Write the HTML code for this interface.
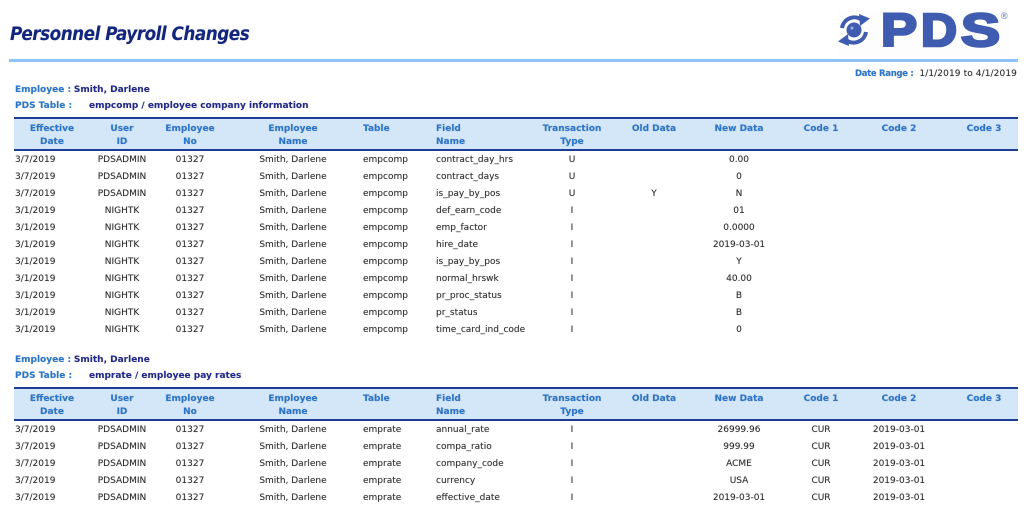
<!DOCTYPE html>
<html><head><meta charset="utf-8"><style>
html,body{margin:0;padding:0;background:#fff}
body{width:1024px;height:504px;overflow:hidden;position:relative;font-family:"DejaVu Sans",sans-serif;font-size:9px;color:#2a2a2a;text-shadow:0 0 1px rgba(40,40,60,.3)}
.a{position:absolute;white-space:nowrap}
h1{position:absolute;margin:0;left:10px;top:24px;font:italic bold 18.5px "DejaVu Sans",sans-serif;color:#12267e;white-space:nowrap;letter-spacing:-.55px;transform:scaleX(.91);transform-origin:0 0}
.bar{position:absolute;left:9px;top:59px;width:1009px;height:3px;background:#8fc4f8}
.l{color:#2876cc;font-weight:bold}.n{color:#23298a;font-weight:bold}
table{position:absolute;left:14px;width:1004px;border-collapse:collapse;table-layout:fixed}
th{background:#d4e7f9;color:#2876cc;font-weight:bold;height:25px;padding:4px 0 0;line-height:13px;vertical-align:top;border-top:2px solid #1f3c96;border-bottom:2px solid #1f3c96;white-space:nowrap}
td{height:17px;padding:0;line-height:17px;text-align:center;white-space:nowrap;position:relative;top:1px}
.x{text-align:left;padding-left:3px}
td:first-child{text-align:left;padding-left:1px}
</style></head><body>
<h1>Personnel Payroll Changes</h1>
<svg class="a" style="left:832px;top:6px" width="185" height="52" viewBox="832 6 185 52">
<rect x="838" y="11" width="171" height="47" fill="#fdfdfd"/>
<circle cx="854" cy="30" r="7.500" fill="#3f5cb0"/><circle cx="852" cy="28" r="1.500" fill="#9db0dc"/>
<path d="M842 28A12.500 12.500 0 0 1 862 20" fill="none" stroke="#3f5cb0" stroke-width="4"/>
<path d="M859 14L870 18.500L860 26Z" fill="#3f5cb0"/>
<path d="M866 32A12.500 12.500 0 0 1 846 40" fill="none" stroke="#3f5cb0" stroke-width="4"/>
<path d="M849 46L838 41.500L848 34Z" fill="#3f5cb0"/>
<g font-family="Liberation Sans" font-weight="bold" font-size="46" fill="#3f5cb0" stroke="#3f5cb0" stroke-width="2.600" style="text-shadow:none">
<text x="881" y="46" textLength="36" lengthAdjust="spacingAndGlyphs">P</text>
<text x="921" y="46" textLength="36" lengthAdjust="spacingAndGlyphs">D</text>
<text x="961" y="46" textLength="39" lengthAdjust="spacingAndGlyphs">S</text>
</g>
<text x="1001" y="19" font-family="Liberation Sans" font-size="9" fill="#7f93c9">®</text>
</svg>
<div class="bar"></div>
<div class="a" style="right:7px;top:69px;letter-spacing:.1px"><span class="l" style="letter-spacing:-.3px;font-size:8.5px">Date Range :</span>&nbsp; 1/1/2019 to 4/1/2019</div>
<div class="a" style="left:15px;top:85px"><span class="l">Employee :</span> <span class="n">Smith, Darlene</span></div>
<div class="a" style="left:15px;top:101px"><span class="l">PDS Table :</span></div>
<div class="a n" style="left:89px;top:101px">empcomp / employee company information</div>
<table style="top:117px">
<colgroup><col style="width:76px"><col style="width:64px"><col style="width:72px"><col style="width:134px"><col style="width:73px"><col style="width:87px"><col style="width:104px"><col style="width:60px"><col style="width:110px"><col style="width:54px"><col style="width:102px"><col style="width:68px"></colgroup>
<tr><th>Effective<br>Date</th><th>User<br>ID</th><th>Employee<br>No</th><th>Employee<br>Name</th><th class="x">Table</th><th class="x">Field<br>Name</th><th>Transaction<br>Type</th><th>Old Data</th><th>New Data</th><th>Code 1</th><th>Code 2</th><th>Code 3</th></tr>
<tr><td>3/7/2019</td><td>PDSADMIN</td><td>01327</td><td>Smith, Darlene</td><td class="x">empcomp</td><td class="x">contract_day_hrs</td><td>U</td><td></td><td>0.00</td><td></td><td></td><td></td></tr>
<tr><td>3/7/2019</td><td>PDSADMIN</td><td>01327</td><td>Smith, Darlene</td><td class="x">empcomp</td><td class="x">contract_days</td><td>U</td><td></td><td>0</td><td></td><td></td><td></td></tr>
<tr><td>3/7/2019</td><td>PDSADMIN</td><td>01327</td><td>Smith, Darlene</td><td class="x">empcomp</td><td class="x">is_pay_by_pos</td><td>U</td><td>Y</td><td>N</td><td></td><td></td><td></td></tr>
<tr><td>3/1/2019</td><td>NIGHTK</td><td>01327</td><td>Smith, Darlene</td><td class="x">empcomp</td><td class="x">def_earn_code</td><td>I</td><td></td><td>01</td><td></td><td></td><td></td></tr>
<tr><td>3/1/2019</td><td>NIGHTK</td><td>01327</td><td>Smith, Darlene</td><td class="x">empcomp</td><td class="x">emp_factor</td><td>I</td><td></td><td>0.0000</td><td></td><td></td><td></td></tr>
<tr><td>3/1/2019</td><td>NIGHTK</td><td>01327</td><td>Smith, Darlene</td><td class="x">empcomp</td><td class="x">hire_date</td><td>I</td><td></td><td>2019-03-01</td><td></td><td></td><td></td></tr>
<tr><td>3/1/2019</td><td>NIGHTK</td><td>01327</td><td>Smith, Darlene</td><td class="x">empcomp</td><td class="x">is_pay_by_pos</td><td>I</td><td></td><td>Y</td><td></td><td></td><td></td></tr>
<tr><td>3/1/2019</td><td>NIGHTK</td><td>01327</td><td>Smith, Darlene</td><td class="x">empcomp</td><td class="x">normal_hrswk</td><td>I</td><td></td><td>40.00</td><td></td><td></td><td></td></tr>
<tr><td>3/1/2019</td><td>NIGHTK</td><td>01327</td><td>Smith, Darlene</td><td class="x">empcomp</td><td class="x">pr_proc_status</td><td>I</td><td></td><td>B</td><td></td><td></td><td></td></tr>
<tr><td>3/1/2019</td><td>NIGHTK</td><td>01327</td><td>Smith, Darlene</td><td class="x">empcomp</td><td class="x">pr_status</td><td>I</td><td></td><td>B</td><td></td><td></td><td></td></tr>
<tr><td>3/1/2019</td><td>NIGHTK</td><td>01327</td><td>Smith, Darlene</td><td class="x">empcomp</td><td class="x">time_card_ind_code</td><td>I</td><td></td><td>0</td><td></td><td></td><td></td></tr>
</table>
<div class="a" style="left:15px;top:355px"><span class="l">Employee :</span> <span class="n">Smith, Darlene</span></div>
<div class="a" style="left:15px;top:371px"><span class="l">PDS Table :</span></div>
<div class="a n" style="left:89px;top:371px">emprate / employee pay rates</div>
<table style="top:387px">
<colgroup><col style="width:76px"><col style="width:64px"><col style="width:72px"><col style="width:134px"><col style="width:73px"><col style="width:87px"><col style="width:104px"><col style="width:60px"><col style="width:110px"><col style="width:54px"><col style="width:102px"><col style="width:68px"></colgroup>
<tr><th>Effective<br>Date</th><th>User<br>ID</th><th>Employee<br>No</th><th>Employee<br>Name</th><th class="x">Table</th><th class="x">Field<br>Name</th><th>Transaction<br>Type</th><th>Old Data</th><th>New Data</th><th>Code 1</th><th>Code 2</th><th>Code 3</th></tr>
<tr><td>3/7/2019</td><td>PDSADMIN</td><td>01327</td><td>Smith, Darlene</td><td class="x">emprate</td><td class="x">annual_rate</td><td>I</td><td></td><td>26999.96</td><td>CUR</td><td>2019-03-01</td><td></td></tr>
<tr><td>3/7/2019</td><td>PDSADMIN</td><td>01327</td><td>Smith, Darlene</td><td class="x">emprate</td><td class="x">compa_ratio</td><td>I</td><td></td><td>999.99</td><td>CUR</td><td>2019-03-01</td><td></td></tr>
<tr><td>3/7/2019</td><td>PDSADMIN</td><td>01327</td><td>Smith, Darlene</td><td class="x">emprate</td><td class="x">company_code</td><td>I</td><td></td><td>ACME</td><td>CUR</td><td>2019-03-01</td><td></td></tr>
<tr><td>3/7/2019</td><td>PDSADMIN</td><td>01327</td><td>Smith, Darlene</td><td class="x">emprate</td><td class="x">currency</td><td>I</td><td></td><td>USA</td><td>CUR</td><td>2019-03-01</td><td></td></tr>
<tr><td>3/7/2019</td><td>PDSADMIN</td><td>01327</td><td>Smith, Darlene</td><td class="x">emprate</td><td class="x">effective_date</td><td>I</td><td></td><td>2019-03-01</td><td>CUR</td><td>2019-03-01</td><td></td></tr>
</table>
</body></html>
